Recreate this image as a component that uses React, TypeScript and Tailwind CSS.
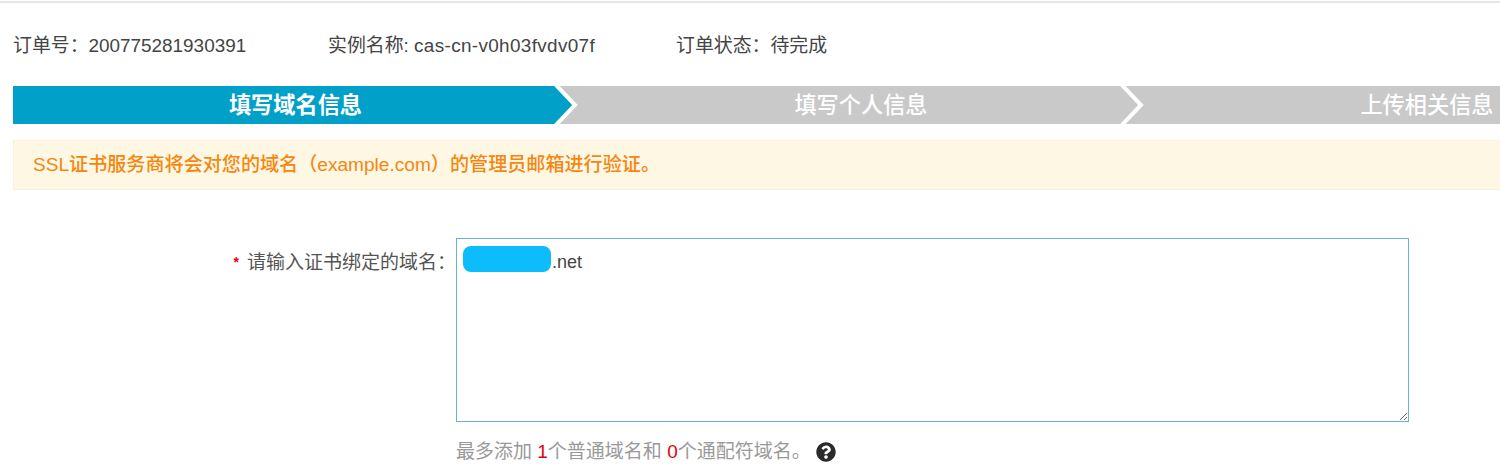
import { FaQuestionCircle } from "react-icons/fa";

function Chevron({ fill, className }: { fill: string; className: string }) {
  return (
    <svg width="34" height="38" viewBox="0 0 34 38" className={className}>
      <path d="M0 -2 L9 -2 L29 19 L9 40 L0 40 Z" fill={fill} />
      <path d="M9 -2 L29 19 L9 40" fill="none" stroke="#ffffff" strokeWidth="4" />
    </svg>
  );
}

export default function App() {
  return (
    <div className="w-[1500px] h-[475px] overflow-hidden bg-white font-['Liberation_Sans','Noto_Sans_CJK_SC',sans-serif]">
      <div className="h-[3px] bg-[#e6e6e6] border-t border-white" />
      <div className="flex h-[83px] items-center pl-[13px] pt-[3px] text-[18.9px] text-[#444444]">
        <span className="w-[315px]">订单号：200775281930391</span>
        <span className="w-[348px]">
          实例名称: <span className="tracking-[0.35px]">cas-cn-v0h03fvdv07f</span>
        </span>
        <span>订单状态：待完成</span>
      </div>
      <div className="ml-[13px] flex h-[38px] overflow-hidden bg-[#c9c9c9] text-[22.2px] font-medium text-white">
        <div className="relative flex w-[542px] shrink-0 items-center justify-center bg-[#00a0c9] pl-[23px] pt-[2px] font-bold">
          填写域名信息
          <Chevron fill="#00a0c9" className="absolute top-0 right-[-25px]" />
        </div>
        <div className="relative ml-[9px] flex w-[566px] shrink-0 items-center justify-center pl-[28px] pt-[2px]">
          填写个人信息
          <Chevron fill="#c9c9c9" className="absolute top-0 right-[-16px]" />
        </div>
        <div className="flex w-[566px] shrink-0 items-center justify-center pl-[28px] pt-[2px]">上传相关信息</div>
      </div>
      <div className="ml-[13px] mt-[16px] flex h-[50px] w-[1500px] items-center border border-[#f9f2d9] bg-[#fdf7e4] pl-[19px] text-[19.1px] font-medium text-[#f5870f]">
        SSL证书服务商将会对您的域名（example.com）的管理员邮箱进行验证。
      </div>
      <div className="mt-[48px] flex items-start">
        <div className="flex w-[456px] justify-end gap-[8px] pt-[11px] text-[19px] text-[#555555]">
          <span className="pt-[3px] text-[14px] font-bold text-[#e3000b]">*</span>
          <span>请输入证书绑定的域名：</span>
        </div>
        <div>
          <div className="relative h-[184px] w-[953px]">
            <textarea
              defaultValue=".net"
              className="block h-full w-full border border-[#69b0dc] py-[11px] pl-[7px] indent-[88px] text-[18px] leading-[24px] text-[#444444] outline-none"
            />
            <div className="absolute left-[7px] top-[8px] h-[26px] w-[88px] rounded-[8px] bg-[#0dbcfb]" />
          </div>
          <div className="mt-[16px] flex items-center text-[19px] text-[#999999]">
            <span>
              最多添加 <span className="text-[#e3000b]">1</span>个普通域名和 <span className="text-[#e3000b]">0</span>个通配符域名。
            </span>
            <FaQuestionCircle className="ml-[5px] text-[20px] text-[#2b2b2b]" />
          </div>
        </div>
      </div>
    </div>
  );
}
